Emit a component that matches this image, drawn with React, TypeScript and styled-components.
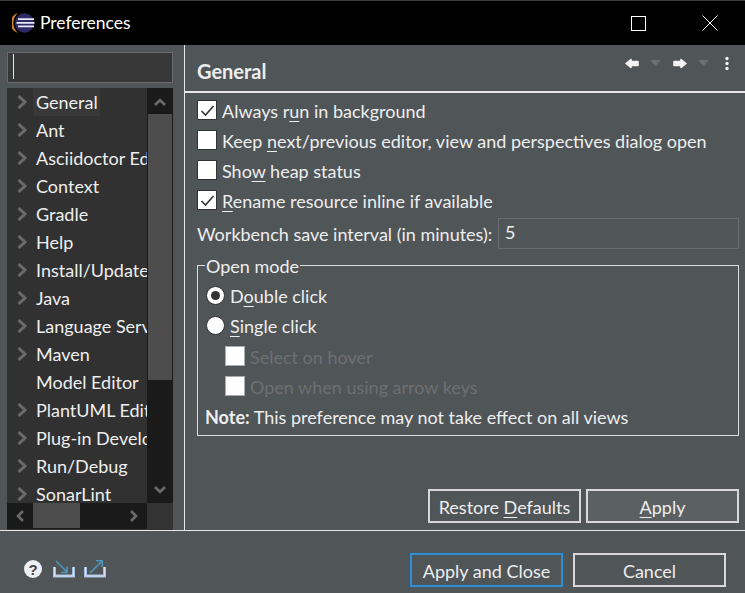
import React from "react";
import styled, { createGlobalStyle } from "styled-components";

const Global = createGlobalStyle`
  html, body { margin: 0; padding: 0; background: #505558; }
  body { font-family: "Lato", "Open Sans", sans-serif; font-size: 18px; color: #eeeeee; }
  * { box-sizing: border-box; }
`;

const Window = styled.div`
  width: 745px; height: 593px; display: flex; flex-direction: column; overflow: hidden; background: #505558;
`;
const TitleBar = styled.div`
  height: 45px; flex: none; background: #000; display: flex; align-items: center; color: #fff;
  border-top: 1px solid #3c3c3c;
`;
const TitleText = styled.div`margin-left: 5px; font-size: 17.5px; line-height: 20px; flex: 1;`;
const Logo = styled.svg`margin-left: 12px; display: block;`;
const WinBtn = styled.svg<{ $mr: number }>`display: block; margin-right: ${p => p.$mr}px;`;

const Body = styled.div`height: 486px; flex: none; display: flex; border-bottom: 1px solid #e6e6e6;`;
const Side = styled.div`width: 185px; flex: none; padding: 7px 11px 0 7px; border-right: 1px solid #e6e6e6; display: flex; flex-direction: column; gap: 5px;`;
const Search = styled.div`
  height: 31px; flex: none; background: #383838; border: 1px solid #686c6e; position: relative;
  &::after { content: ""; position: absolute; left: 5px; top: 1px; height: 25px; width: 1px; background: #e6e6e6; }
`;
const Tree = styled.div`flex: 1; display: grid; grid-template-columns: 140px 26px; grid-template-rows: 415px 26px; background: #333; min-height: 0;`;
const TreeList = styled.div`overflow: hidden; background: #313131;`;
const TreeRow = styled.div`height: 28px; display: flex; align-items: center; padding-left: 9px; white-space: nowrap;`;
const Chevron = styled.svg`flex: none; display: block; width: 12px; height: 14px;`;
const ChevronSlot = styled.div`width: 12px; flex: none;`;
const TreeLabel = styled.span<{ $selected?: boolean }>`
  padding: 0 2px 0 3px; line-height: 28px; margin-left: 5px;
  background: ${p => (p.$selected ? "#383838" : "transparent")};
`;
const VBar = styled.div`display: flex; flex-direction: column; background: #1a1a1a;`;
const BarCap = styled.div`height: 26px; flex: none; display: flex; align-items: center; justify-content: center;`;
const VThumb = styled.div`height: 266px; flex: none; background: #4d4d4d; margin-left: 1px; margin-right: 1px;`;
const VTrack = styled.div`flex: 1;`;
const HBar = styled.div`display: flex; background: #1a1a1a; align-items: stretch;`;
const HCap = styled.div`width: 26px; flex: none; display: flex; align-items: center; justify-content: center;`;
const HThumb = styled.div`width: 47px; flex: none; background: #4d4d4d; margin-bottom: 1px;`;
const HTrack = styled.div`flex: 1;`;
const Corner = styled.div`background: #333;`;

const Main = styled.div`flex: 1; display: flex; flex-direction: column; min-width: 0;`;
const Header = styled.div`height: 48px; flex: none; border-bottom: 2px solid #e6e6e6; padding-left: 12px; display: flex;`;
const HeaderTitle = styled.div`font-weight: 700; font-size: 20px; line-height: 24px; margin-top: 14px; flex: 1;`;
const Tools = styled.svg`display: block; margin-top: 6px;`;
const Content = styled.div`flex: 1; padding: 2px 6px 7px 12px; display: flex; flex-direction: column; min-height: 0;`;
const CheckRow = styled.label<{ $disabled?: boolean }>`
  height: 30px; display: flex; align-items: center; gap: 5px; white-space: nowrap;
  color: ${p => (p.$disabled ? "#6d7072" : "inherit")};
`;
const CheckText = styled.span`padding-top: 2px;`;
const CheckBox = styled.span<{ $disabled?: boolean }>`
  width: 20px; height: 20px; flex: none; background: #fff;
  border: 1px solid ${p => (p.$disabled ? "#a9abac" : "#333")};
  display: flex; align-items: center; justify-content: center;
`;
const M = styled.span`text-decoration: underline; text-underline-offset: 3px;`;
const FieldRow = styled.div`display: flex; align-items: center; justify-content: space-between; height: 31px; margin-top: 3px; white-space: nowrap;`;
const Field = styled.div`width: 241px; flex: none; height: 31px; border: 1px solid #686c6e; padding-left: 6px; line-height: 27px;`;
const Group = styled.fieldset`
  margin: 6px 0 0 0; padding: 6px 0 0 8px; height: 181px; border: 1px solid #dcdcdc; border-radius: 0; min-width: 0;
`;
const Legend = styled.legend`padding: 0 1px; margin-left: -1px; line-height: 22px; height: 20px;`;
const RadioRow = styled.div`height: 30px; display: flex; align-items: center; gap: 5px; white-space: nowrap;`;
const Radio = styled.span<{ $on?: boolean }>`
  width: 19px; height: 19px; flex: none; border-radius: 50%; background: #fff; border: 1px solid #333; display: flex; align-items: center; justify-content: center; margin-bottom: 2px;
  &::after { content: ""; width: 9px; height: 9px; border-radius: 50%; background: ${p => (p.$on ? "#333" : "transparent")}; }
`;
const Indented = styled.div`padding-left: 19px;`;
const Note = styled.div`height: 30px; display: flex; align-items: center; white-space: pre; margin-top: 1px; margin-left: -1px;`;
const Strong = styled.b`font-weight: 700;`;
const Spacer = styled.div`flex: 1;`;
const ButtonBar = styled.div`display: flex; justify-content: flex-end; gap: 5px; flex: none;`;
const Btn = styled.button<{ $primary?: boolean; $hover?: boolean }>`
  width: 153px; height: 34px; background: ${p => (p.$hover ? "#5b6063" : "#505558")}; color: #eee; font: inherit;
  border: 2px solid ${p => (p.$primary ? "#2a8fd8" : "#d8d8d8")}; padding: 2px 0 0; border-radius: 0; line-height: 26px;
`;
const Footer = styled.div`flex: 1; display: flex; align-items: flex-start; padding: 22px 19px 0 24px;`;
const FooterIcons = styled.div`flex: 1; display: flex; align-items: flex-start; gap: 9px; padding-top: 7px;`;
const FooterBtns = styled.div`display: flex; gap: 10px;`;
const Svg = styled.svg`display: block;`;

const chev = (
  <Chevron viewBox="0 0 12 14"><path d="M2.5 1 L9 7 L2.5 13" fill="none" stroke="#6b6b6b" strokeWidth="3" /></Chevron>
);
const items: [string, boolean][] = [
  ["General", true], ["Ant", true], ["Asciidoctor Editor", true], ["Context", true], ["Gradle", true], ["Help", true],
  ["Install/Update", true], ["Java", true], ["Language Servers", true], ["Maven", true], ["Model Editor", false],
  ["PlantUML Editor", true], ["Plug-in Development", true], ["Run/Debug", true], ["SonarLint", true],
];
const Tick = () => (
  <Svg width="15" height="15" viewBox="0 0 15 15"><path d="M1.5 8 L5.5 12 L13.5 3" fill="none" stroke="#333" strokeWidth="1.6" /></Svg>
);
const Tray = () => (
  <>
    <path d="M1.5 7 V16 H20.5 V7" fill="none" stroke="#a5bfe2" strokeWidth="3" />
    <path d="M1.5 7 V16 H20.5 V7" fill="none" stroke="#d6e2f2" strokeWidth="1" />
  </>
);

export default function App() {
  return (
    <Window>
      <Global />
      <TitleBar>
        <Logo width="23" height="22" viewBox="0 0 23 22">
          <path d="M6 1 A10.5 10.5 0 0 0 6 21 A13 13 0 0 1 6 1 Z" fill="#d0882a" />
          <circle cx="12.5" cy="11" r="9.7" fill="#2f2a66" />
          <path d="M6 7.2 H22 M4.5 10.8 H22.5 M6 14.4 H22" stroke="#e8e8f4" strokeWidth="1.7" />
        </Logo>
        <TitleText>Preferences</TitleText>
        <WinBtn $mr={56} width="15" height="15" viewBox="0 0 15 15"><rect x=".5" y=".5" width="14" height="14" fill="none" stroke="#fff" /></WinBtn>
        <WinBtn $mr={27} width="16" height="16" viewBox="0 0 16 16"><path d="M.5 .5 L15.5 15.5 M15.5 .5 L.5 15.5" stroke="#fff" fill="none" /></WinBtn>
      </TitleBar>
      <Body>
        <Side>
          <Search />
          <Tree>
            <TreeList>
              {items.map(([t, arrow], i) => (
                <TreeRow key={t}>
                  {arrow ? chev : <ChevronSlot />}
                  <TreeLabel $selected={i === 0}>{t}</TreeLabel>
                </TreeRow>
              ))}
            </TreeList>
            <VBar>
              <BarCap><Svg width="12" height="12" viewBox="0 0 12 12"><path d="M1 10 L6 5 L11 10" fill="none" stroke="#6b6b6b" strokeWidth="2.6" /></Svg></BarCap>
              <VThumb />
              <VTrack />
              <BarCap><Svg width="12" height="8" viewBox="0 0 12 8"><path d="M1 1 L6 6 L11 1" fill="none" stroke="#6b6b6b" strokeWidth="2.6" /></Svg></BarCap>
            </VBar>
            <HBar>
              <HCap><Svg width="8" height="12" viewBox="0 0 8 12"><path d="M7 1 L2 6 L7 11" fill="none" stroke="#6b6b6b" strokeWidth="2.6" /></Svg></HCap>
              <HThumb />
              <HTrack />
              <HCap><Svg width="8" height="12" viewBox="0 0 8 12"><path d="M1 1 L6 6 L1 11" fill="none" stroke="#6b6b6b" strokeWidth="2.6" /></Svg></HCap>
            </HBar>
            <Corner />
          </Tree>
        </Side>
        <Main>
          <Header>
            <HeaderTitle>General</HeaderTitle>
            <Tools width="122" height="30" viewBox="0 0 122 30">
              <path d="M3 12.5 L8 8.5 V10.5 H15 V14.5 H8 V16.5 Z" fill="#f2f2f2" stroke="#f2f2f2" strokeWidth="1.6" strokeLinejoin="round" />
              <path d="M27 9 H38 L32.5 15 Z" fill="#6d7072" />
              <path d="M63 12.5 L58 8.5 V10.5 H51 V14.5 H58 V16.5 Z" fill="#f2f2f2" stroke="#f2f2f2" strokeWidth="1.6" strokeLinejoin="round" />
              <path d="M75 9 H86 L80.5 15 Z" fill="#6d7072" />
              <circle cx="104" cy="7.5" r="1.7" fill="#f2f2f2" />
              <circle cx="104" cy="12.5" r="1.7" fill="#f2f2f2" />
              <circle cx="104" cy="17.5" r="1.7" fill="#f2f2f2" />
            </Tools>
          </Header>
          <Content>
            <CheckRow><CheckBox><Tick /></CheckBox><CheckText>Always r<M>u</M>n in background</CheckText></CheckRow>
            <CheckRow><CheckBox /><CheckText>Keep <M>n</M>ext/previous editor, view and perspectives dialog open</CheckText></CheckRow>
            <CheckRow><CheckBox /><CheckText>Sho<M>w</M> heap status</CheckText></CheckRow>
            <CheckRow><CheckBox><Tick /></CheckBox><CheckText><M>R</M>ename resource inline if available</CheckText></CheckRow>
            <FieldRow><span>Workbench save interval (in minutes):</span><Field>5</Field></FieldRow>
            <Group>
              <Legend>Open mode</Legend>
              <RadioRow><Radio $on /><span>D<M>o</M>uble click</span></RadioRow>
              <RadioRow><Radio /><span><M>S</M>ingle click</span></RadioRow>
              <Indented>
                <CheckRow $disabled><CheckBox $disabled /><CheckText>Select on hover</CheckText></CheckRow>
                <CheckRow $disabled><CheckBox $disabled /><CheckText>Open when using arrow keys</CheckText></CheckRow>
              </Indented>
              <Note><Strong>Note:</Strong> This preference may not take effect on all views</Note>
            </Group>
            <Spacer />
            <ButtonBar>
              <Btn>Restore <M>D</M>efaults</Btn>
              <Btn $hover><M>A</M>pply</Btn>
            </ButtonBar>
          </Content>
        </Main>
      </Body>
      <Footer>
        <FooterIcons>
          <Svg width="20" height="19" viewBox="0 0 20 19">
            <circle cx="9" cy="9" r="9" fill="#eef0f4" />
            <text x="9" y="14.5" textAnchor="middle" fontSize="15" fontWeight="700" fill="#444" fontFamily="Liberation Sans">?</text>
          </Svg>
          <Svg width="22" height="19" viewBox="0 0 22 19">
            <Tray />
            <path d="M3 1 L14 12 M14 6.5 V12.5 H8" fill="none" stroke="#4f97b8" strokeWidth="1.6" />
          </Svg>
          <Svg width="22" height="19" viewBox="0 0 22 19">
            <Tray />
            <path d="M6 13 L18 1 M12 .8 H18.2 V7" fill="none" stroke="#4f97b8" strokeWidth="1.6" />
          </Svg>
        </FooterIcons>
        <FooterBtns>
          <Btn $primary>Apply and Close</Btn>
          <Btn>Cancel</Btn>
        </FooterBtns>
      </Footer>
    </Window>
  );
}
